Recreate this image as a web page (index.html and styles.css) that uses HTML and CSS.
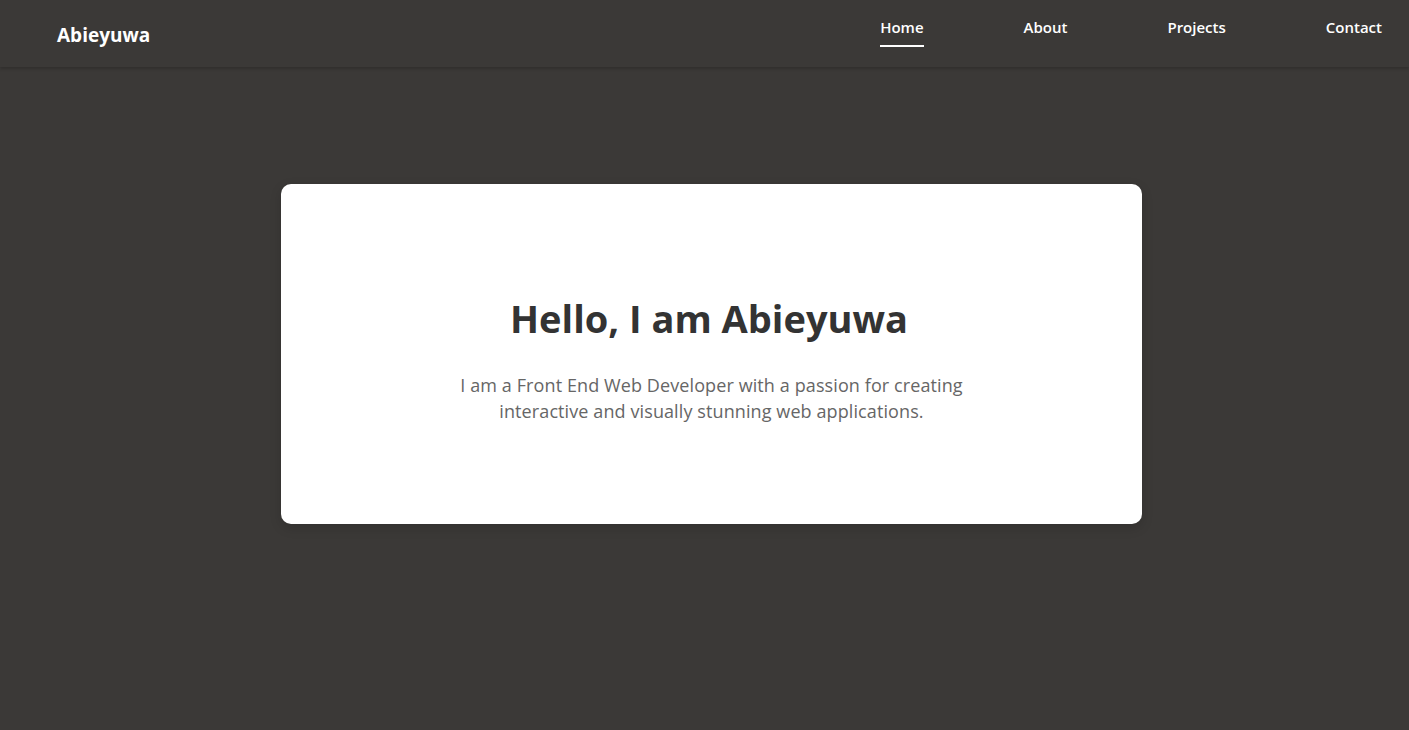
FILE: index.html
```html
<!DOCTYPE html>
<html lang="en">
<head>
<meta charset="utf-8">
<title>Abieyuwa</title>
<link rel="stylesheet" href="styles.css">
</head>
<body>
<header class="site-header">
  <div class="logo">Abieyuwa</div>
  <nav class="nav">
    <a class="nav-link active" href="#">Home</a>
    <a class="nav-link" href="#">About</a>
    <a class="nav-link" href="#">Projects</a>
    <a class="nav-link" href="#">Contact</a>
  </nav>
</header>
<main class="main">
  <section class="card">
    <h1 class="title">Hello, I am Abieyuwa</h1>
    <p class="intro">I am a Front End Web Developer with a passion for creating interactive and visually stunning web applications.</p>
  </section>
</main>
</body>
</html>
```

FILE: styles.css
```css
* { box-sizing: border-box; }
html, body { margin: 0; padding: 0; }
body {
  background: #3b3937;
  font-family: "Open Sans", "Noto Sans", sans-serif;
  min-height: 730px;
}
.site-header {
  height: 67px;
  display: flex;
  align-items: flex-start;
  justify-content: space-between;
  padding: 0 27px 0 57px;
  background: #3b3937;
  box-shadow: 0 2px 3px rgba(0,0,0,0.18);
  position: relative;
}
.logo {
  color: #fff;
  font-weight: 700;
  font-size: 19px;
  line-height: 1;
  margin-top: 26px;
}
.nav {
  display: flex;
  gap: 100px;
  margin-top: 17px;
}
.nav-link {
  color: #fff;
  text-decoration: none;
  font-weight: 600;
  font-size: 15px;
  line-height: 20px;
  padding-bottom: 8px;
  border-bottom: 2px solid transparent;
}
.nav-link.active { border-bottom-color: #fff; }
.main {
  display: flex;
  justify-content: center;
  padding: 117px 0 0 14px;
}
.card {
  width: 861px;
  height: 340px;
  background: #fff;
  border-radius: 10px;
  box-shadow: 0 4px 12px rgba(0,0,0,0.15);
  display: flex;
  flex-direction: column;
  align-items: center;
  padding-top: 111px;
}
.title {
  margin: 0;
  color: #333;
  font-size: 38px;
  font-weight: 700;
  line-height: 46px;
  padding-right: 5px;
}
.intro {
  margin: 31px 0 0;
  width: 560px;
  text-align: center;
  color: #666;
  font-size: 18px;
  line-height: 26px;
  letter-spacing: 0.1px;
}
```
